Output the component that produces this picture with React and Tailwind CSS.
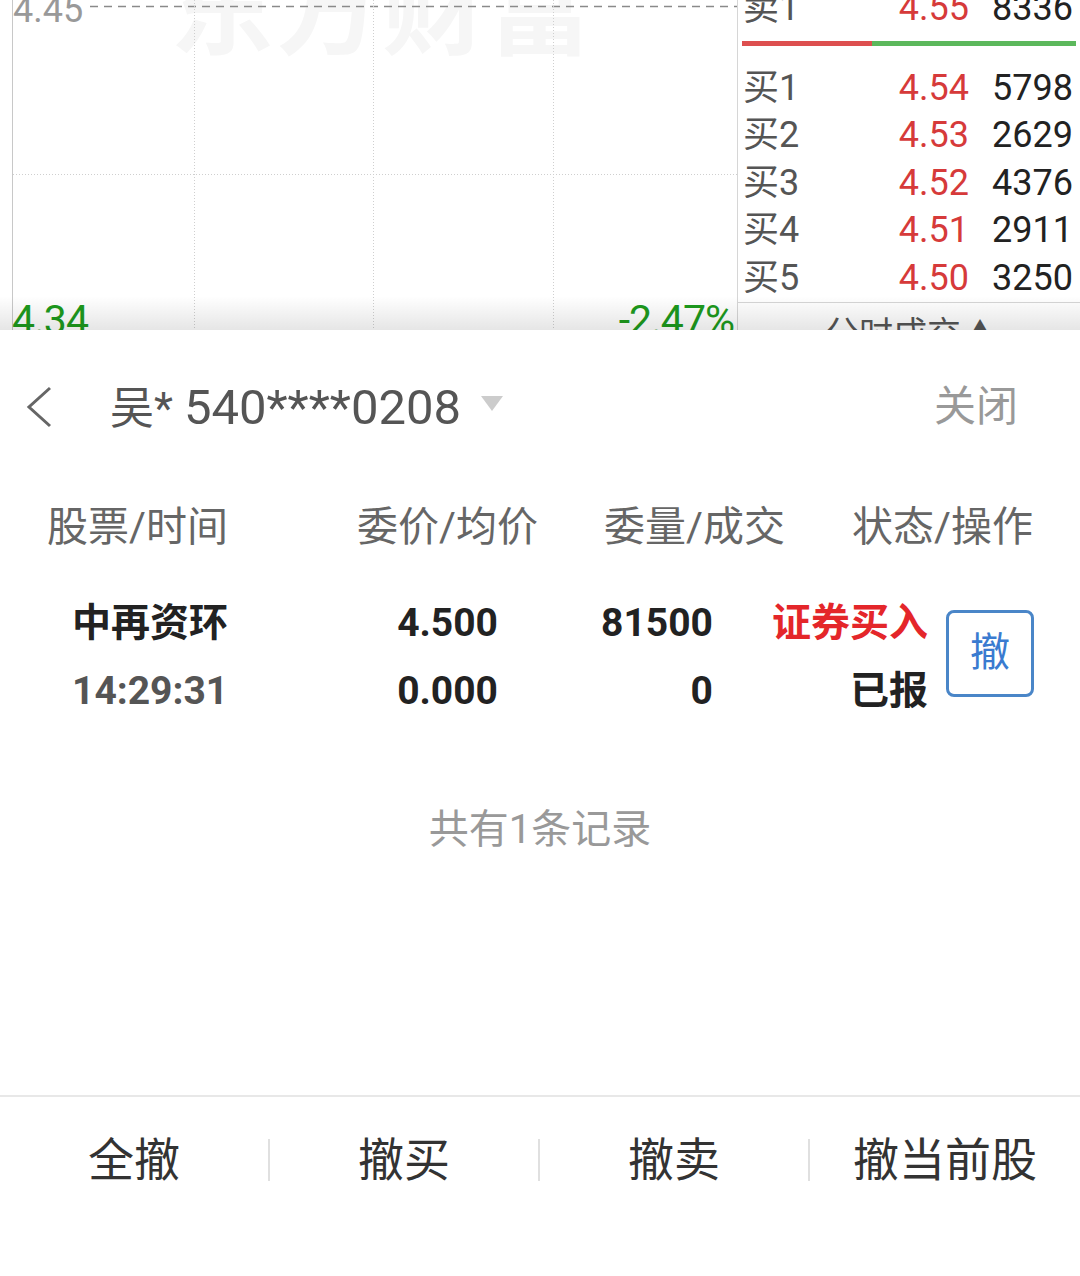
import React from "react";

const cjk = { fontFamily: "Roboto, 'Noto Sans CJK SC', sans-serif" };

// five bid levels shown in the order book
const bids = [
  { label: "买1", price: "4.54", vol: "5798" },
  { label: "买2", price: "4.53", vol: "2629" },
  { label: "买3", price: "4.52", vol: "4376" },
  { label: "买4", price: "4.51", vol: "2911" },
  { label: "买5", price: "4.50", vol: "3250" },
];

const footerActions = ["全撤", "撤买", "撤卖", "撤当前股"];

const ChartGrid = () => (
  <svg className="absolute inset-0" width="737" height="330">
    <line x1="12.5" y1="0" x2="12.5" y2="330" stroke="#c8c8c8" strokeWidth="1" />
    <line x1="90" y1="6.5" x2="737" y2="6.5" stroke="#8a8a8a" strokeWidth="1.5" strokeDasharray="8 6" />
    {[194.5, 373.5, 553.5].map((x) => (
      <line key={x} x1={x} y1="0" x2={x} y2="330" stroke="#cfcfcf" strokeWidth="1" strokeDasharray="1 2" />
    ))}
    <line x1="13" y1="174.5" x2="737" y2="174.5" stroke="#cfcfcf" strokeWidth="1" strokeDasharray="1 2" />
  </svg>
);

const BookRow = ({ label, price, vol, extra = "" }) => (
  <div className={`shrink-0 flex items-center pl-[5px] pr-[7px] text-[36px] leading-none ${extra}`}>
    <span className="text-[#555] w-[130px]">{label}</span>
    <span className="text-[#d63a3a] flex-1 text-right">{price}</span>
    <span className="text-[#222] w-[104px] text-right">{vol}</span>
  </div>
);

const OrderBook = () => (
  <div className="flex-1 border-l border-[#d6d6d6] flex flex-col" style={cjk}>
    <BookRow label="卖1" price="4.55" vol="8336" extra="h-[48px] -mt-[16px]" />
    <div className="shrink-0 h-[32px] flex items-start pt-[9px] px-[4px]">
      <div className="flex-1 h-[5px] flex">
        <div className="w-[130px] bg-[#dd4f4f]" />
        <div className="flex-1 bg-[#5cb85c]" />
      </div>
    </div>
    {bids.map((b) => (
      <BookRow key={b.label} {...b} extra="h-[47.5px]" />
    ))}
    <div className="shrink-0 border-t border-[#d6d6d6] flex justify-center pt-[14px] text-[34px] leading-none text-[#555]">
      <span>分时成交</span>
      <span className="ml-[6px] text-[26px] mt-[2px]">▲</span>
    </div>
  </div>
);

const TopChart = () => (
  <div className="relative h-[330px] shrink-0 overflow-hidden flex bg-white">
    <div className="relative w-[737px] h-full">
      <div
        className="absolute left-[170px] top-[-40px] text-[104px] font-bold leading-none text-[#f6f6f6] tracking-[2px]"
        style={cjk}
      >
        东方财富
      </div>
      <ChartGrid />
      <div className="absolute left-[13px] top-[-8px] text-[36px] leading-none text-[#999] bg-white pr-[2px]" style={cjk}>
        4.45
      </div>
      <div className="absolute left-[12px] top-[300px] text-[41px] leading-none tracking-[-1px] text-[#1d9a1d]" style={cjk}>
        4.34
      </div>
      <div className="absolute right-[3px] top-[300px] text-[41px] leading-none tracking-[-1px] text-[#1d9a1d]" style={cjk}>
        -2.47%
      </div>
    </div>
    <OrderBook />
    <div className="absolute left-0 right-0 bottom-0 h-[34px] bg-gradient-to-b from-transparent to-black/10 pointer-events-none" />
  </div>
);

const SheetHeader = () => (
  <div className="h-[154px] shrink-0 flex items-center" style={cjk}>
    <svg className="ml-[24px]" width="30" height="42" viewBox="0 0 30 42">
      <polyline points="26,2 5,21 26,40" fill="none" stroke="#666" strokeWidth="3" />
    </svg>
    <span className="ml-[56px] text-[44px] leading-none text-[#555]">
      吴* <span className="text-[49px]">540****0208</span>
    </span>
    <svg className="ml-[20px] mt-[-8px]" width="22" height="15" viewBox="0 0 22 15">
      <polygon points="0,0 22,0 11,15" fill="#cccccc" />
    </svg>
    <span className="ml-auto mr-[62px] text-[42px] leading-none text-[#999]">关闭</span>
  </div>
);

const ColumnHeaders = () => (
  <div className="h-[86px] shrink-0 flex items-center pl-[47px] text-[41px] leading-none text-[#666]" style={cjk}>
    <span className="w-[310px]">股票/时间</span>
    <span className="w-[247px]">委价/均价</span>
    <span className="w-[248px]">委量/成交</span>
    <span>状态/操作</span>
  </div>
);

const OrderRow = () => (
  <div className="pt-[19px] shrink-0 flex items-center pl-[72px] font-bold text-[39px] leading-none" style={cjk}>
    <div className="w-[200px] flex flex-col">
      <span className="h-[68px] flex items-center text-[#222]">中再资环</span>
      <span className="h-[68px] flex items-center text-[#555]">14:29:31</span>
    </div>
    <div className="w-[226px] flex flex-col items-end text-[#222]">
      <span className="h-[68px] flex items-center">4.500</span>
      <span className="h-[68px] flex items-center">0.000</span>
    </div>
    <div className="w-[215px] flex flex-col items-end text-[#222]">
      <span className="h-[68px] flex items-center">81500</span>
      <span className="h-[68px] flex items-center">0</span>
    </div>
    <div className="w-[215px] flex flex-col items-end">
      <span className="h-[68px] flex items-center text-[#e4262a]">证券买入</span>
      <span className="h-[68px] flex items-center text-[#222]">已报</span>
    </div>
    <button className="ml-[18px] -mt-[8px] w-[88px] h-[87px] border-[3px] border-[#4a86c8] rounded-[8px] flex items-center justify-center text-[40px] font-normal text-[#3a7bd0]">
      撤
    </button>
  </div>
);

const Footer = () => (
  <div className="mt-auto border-t-2 border-[#e8e8e8] h-[181px]" style={cjk}>
    <div className="h-[126px] flex items-center">
      {footerActions.map((a, i) => (
        <div key={a} className="flex-1 flex items-center relative">
          <span className="flex-1 text-center text-[46px] leading-none text-[#333]">{a}</span>
          {i < footerActions.length - 1 && <div className="w-[2px] h-[42px] bg-[#e0e0e0]" />}
        </div>
      ))}
    </div>
  </div>
);

const App = () => {
  return (
    <div className="w-[1080px] h-[1276px] bg-white flex flex-col overflow-hidden">
      <TopChart />
      <div className="flex-1 flex flex-col bg-white">
        <SheetHeader />
        <ColumnHeaders />
        <OrderRow />
        <div className="mt-[75px] h-[60px] shrink-0 flex items-center justify-center text-[40px] leading-none text-[#999]" style={cjk}>
          共有1条记录
        </div>
        <Footer />
      </div>
    </div>
  );
};

export default App;
